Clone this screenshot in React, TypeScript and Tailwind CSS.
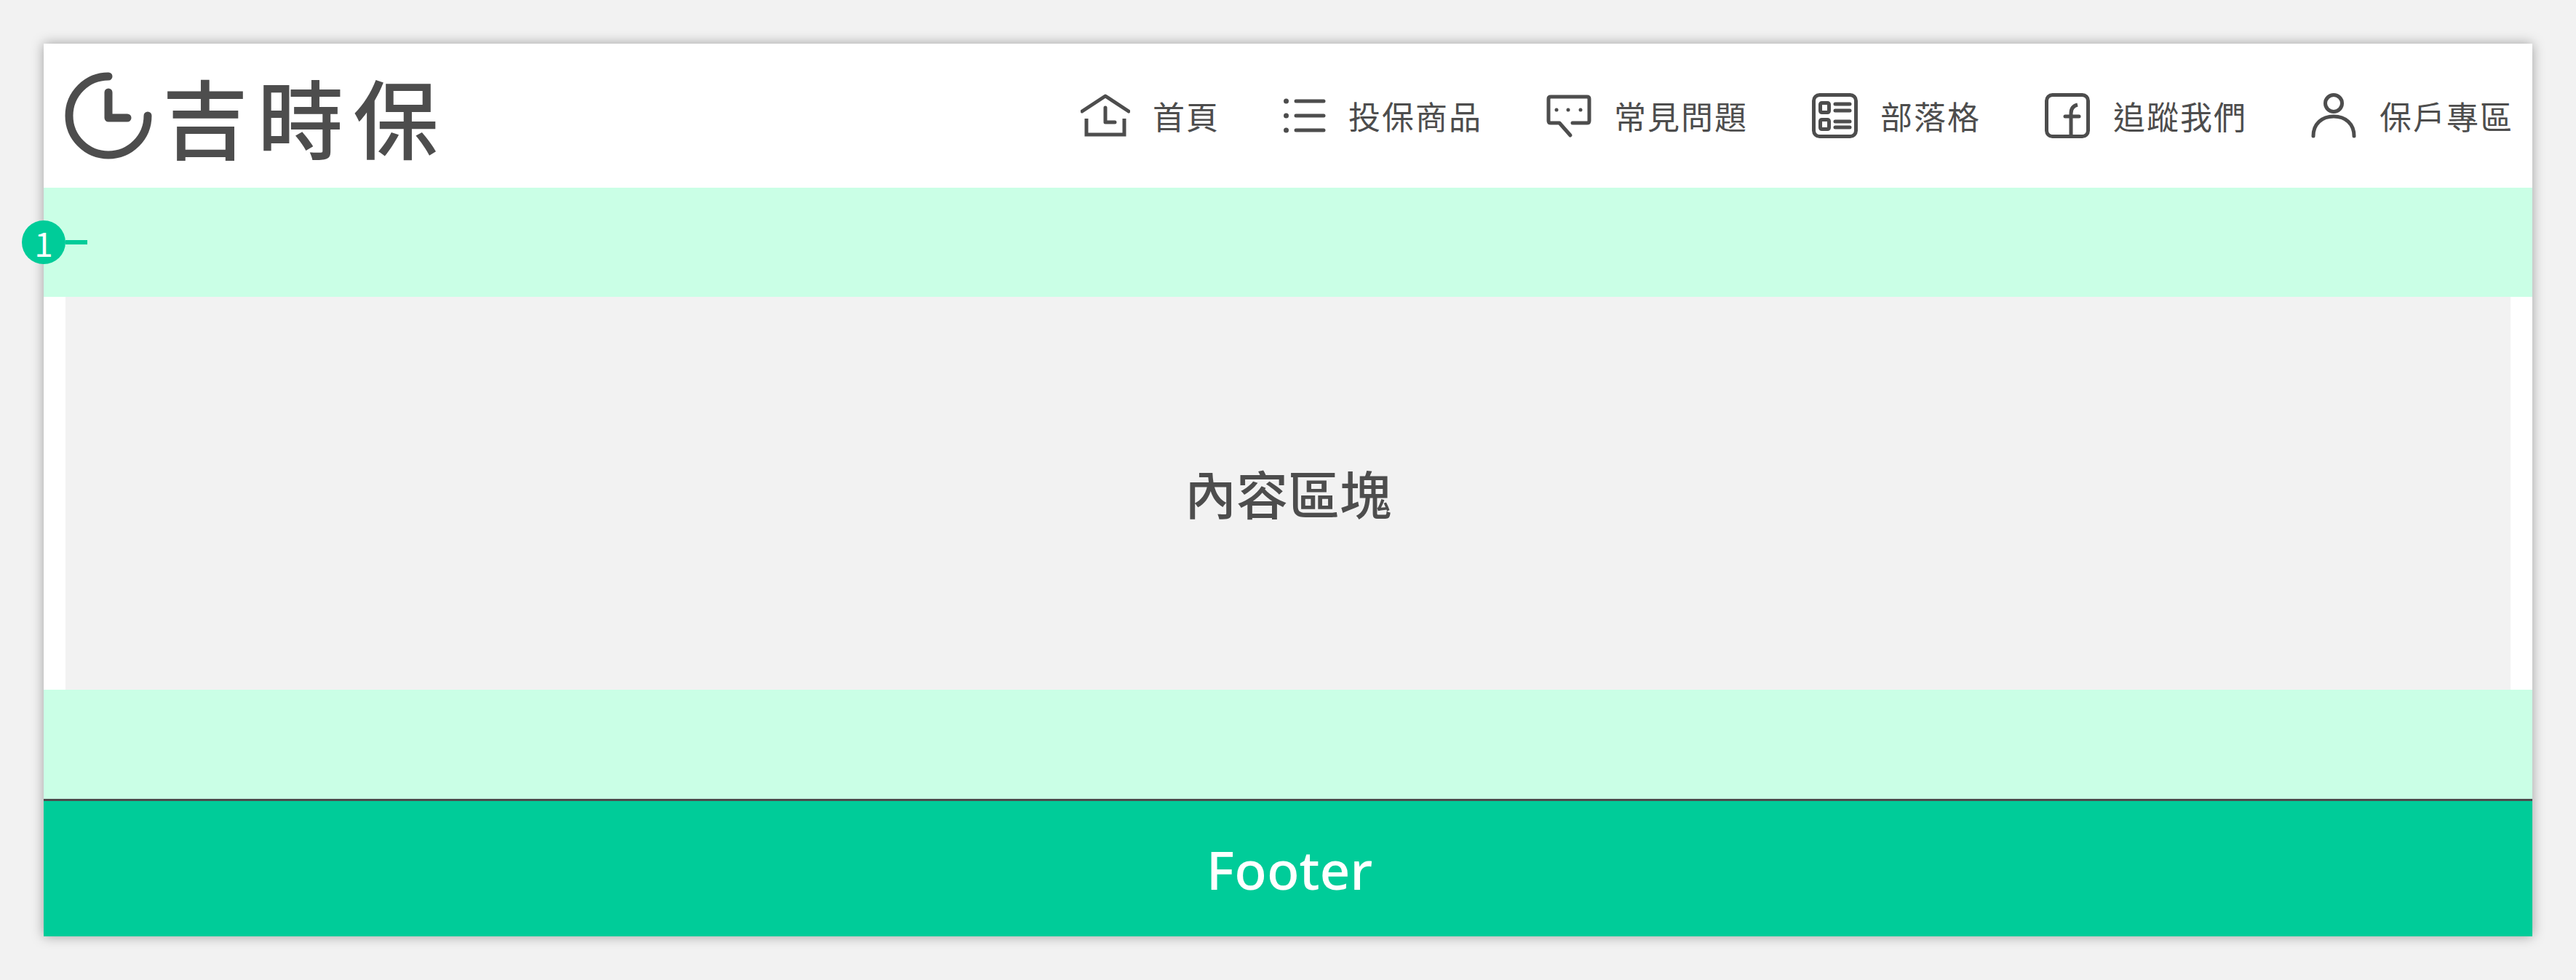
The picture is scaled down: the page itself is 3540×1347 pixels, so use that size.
const cjk = "font-['Noto_Sans_CJK_TC','Noto_Sans',sans-serif]";

const HomeIcon = () => (
  <svg width="68" height="62" viewBox="0 0 68 62" fill="none" stroke="#4d4d4d" strokeWidth="5" strokeLinecap="round" strokeLinejoin="round">
    <path d="M2 25 34 4 66 25" />
    <path d="M8 35V57H60V35" strokeLinecap="butt" strokeLinejoin="miter" />
    <path d="M34 20V40H47" />
  </svg>
);

const ListIcon = () => (
  <svg width="58" height="62" viewBox="0 0 58 62" fill="none" stroke="#4d4d4d" strokeWidth="5" strokeLinecap="round">
    <circle cx="3.5" cy="11" r="3.5" fill="#4d4d4d" stroke="none" />
    <circle cx="3.5" cy="31" r="3.5" fill="#4d4d4d" stroke="none" />
    <circle cx="3.5" cy="51" r="3.5" fill="#4d4d4d" stroke="none" />
    <path d="M17 11H55M17 31H55M17 51H55" />
  </svg>
);

const BubbleIcon = () => (
  <svg width="62" height="62" viewBox="0 0 62 62" fill="none" stroke="#4d4d4d" strokeWidth="5" strokeLinecap="round" strokeLinejoin="round">
    <path d="M36 41H56Q59 41 59 38V8Q59 5 56 5H6Q3 5 3 8V38Q3 41 6 41H18L33 58" />
    <circle cx="14" cy="23" r="2.5" fill="#4d4d4d" stroke="none" />
    <circle cx="30" cy="23" r="2.5" fill="#4d4d4d" stroke="none" />
    <circle cx="47" cy="23" r="2.5" fill="#4d4d4d" stroke="none" />
  </svg>
);

const BlogIcon = () => (
  <svg width="63" height="62" viewBox="0 0 63 62" fill="none" stroke="#4d4d4d" strokeWidth="5" strokeLinecap="round">
    <rect x="2.5" y="2.5" width="58" height="57" rx="8" />
    <rect x="11.5" y="13.5" width="12" height="13" rx="2" />
    <rect x="11.5" y="36.5" width="12" height="13" rx="2" />
    <path d="M32 15H52M32 24H52M32 39H52M32 47H52" />
  </svg>
);

const FacebookIcon = () => (
  <svg width="63" height="62" viewBox="0 0 63 62" fill="none" stroke="#4d4d4d" strokeWidth="5" strokeLinecap="round">
    <rect x="2.5" y="2.5" width="57" height="57" rx="8" />
    <path d="M36 58V28Q36 18 45 16" strokeLinecap="butt" />
    <path d="M28 32H47" />
  </svg>
);

const UserIcon = () => (
  <svg width="63" height="62" viewBox="0 0 63 62" fill="none" stroke="#4d4d4d" strokeWidth="5" strokeLinecap="round">
    <circle cx="31" cy="14" r="11.5" />
    <path d="M3 59C3 42 15 32 31 32C47 32 59 42 59 59" />
  </svg>
);

const navItems = [
  { label: "首頁", icon: <HomeIcon /> },
  { label: "投保商品", icon: <ListIcon /> },
  { label: "常見問題", icon: <BubbleIcon /> },
  { label: "部落格", icon: <BlogIcon /> },
  { label: "追蹤我們", icon: <FacebookIcon /> },
  { label: "保戶專區", icon: <UserIcon /> },
];

const App = () => {
  return (
    <div className={`min-h-screen bg-[#f2f2f2] px-[60px] pt-[60px] text-[#4d4d4d] ${cjk}`}>
      <div className="relative w-[3420px] shadow-[0_0_16px_rgba(0,0,0,0.35)]">
        <header className="flex h-[198px] items-center justify-between bg-white pl-[29px] pr-[26px]">
          <div className="flex items-center gap-[14px]">
            <svg width="120" height="120" viewBox="0 0 120 120" fill="none" stroke="#4d4d4d" strokeWidth="11" strokeLinecap="round" strokeLinejoin="round">
              <path d="M60 6A54 54 0 1 0 114 60" />
              <path d="M60 28V63H86" />
            </svg>
            <span className="text-[118px] leading-none font-medium tracking-[13px]">吉時保</span>
          </div>
          <nav className="flex items-center gap-[88px]">
            {navItems.map((item) => (
              <a key={item.label} className="flex items-center gap-[31px]">
                {item.icon}
                <span className="text-[44px] leading-none tracking-[2px]">{item.label}</span>
              </a>
            ))}
          </nav>
        </header>

        <div className="h-[150px] bg-[#caffe6]" />

        <div className="h-[540px] bg-white px-[30px]">
          <div className="flex h-full items-center justify-center bg-[#f2f2f2] pb-[4px]">
            <span className="text-[71px] leading-none font-medium">內容區塊</span>
          </div>
        </div>

        <div className="h-[150px] bg-[#caffe6]" />

        <footer className="flex h-[189px] items-center justify-center border-t-[3px] border-[#4d4d4d] bg-[#00cc99] pl-[4px]">
          <span className="font-['Noto_Sans',sans-serif] text-[73px] leading-none font-medium text-white">Footer</span>
        </footer>

        <div className="absolute top-[243px] left-[-30px] flex items-center">
          <div className="flex h-[60px] w-[60px] items-center justify-center rounded-full bg-[#00cc99] text-[46px] leading-none text-white">
            1
          </div>
          <div className="h-[6px] w-[30px] bg-[#00cc99]" />
        </div>
      </div>
    </div>
  );
};

export default App;
